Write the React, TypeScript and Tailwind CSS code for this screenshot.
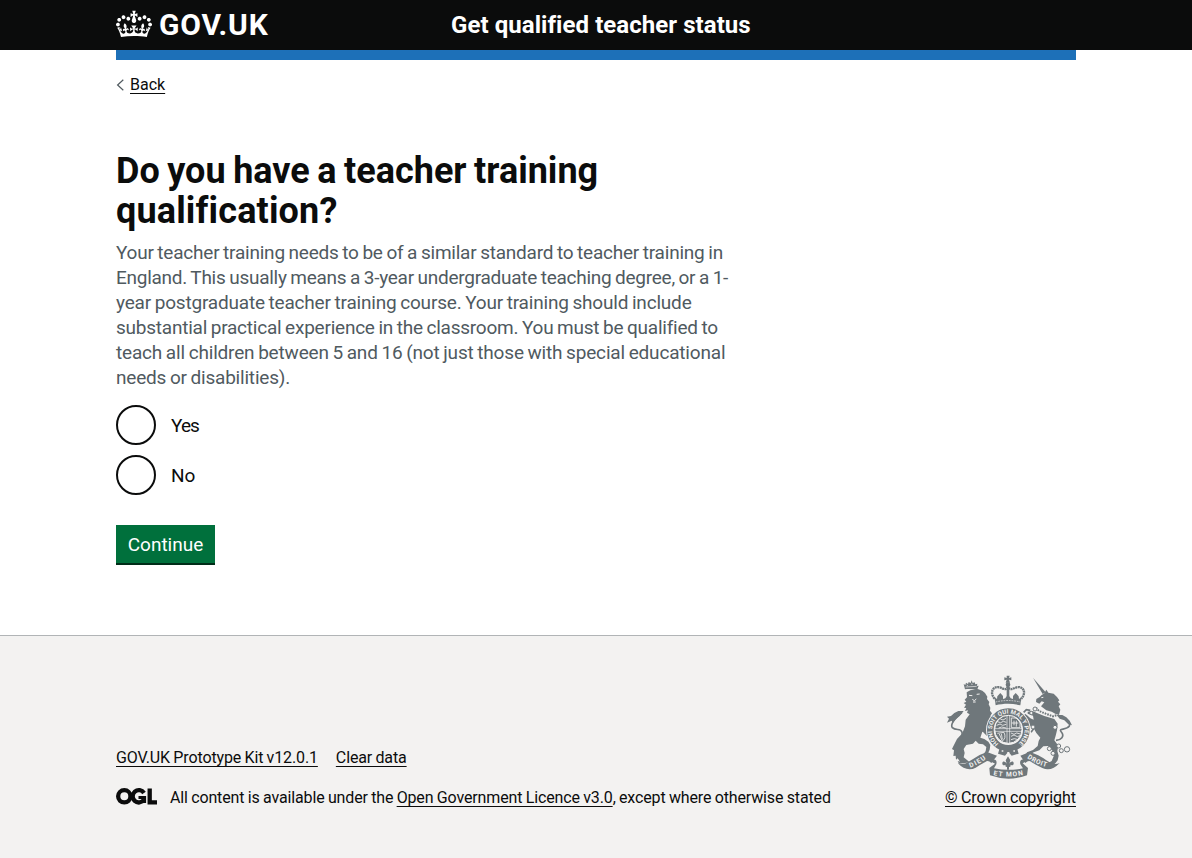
import type { ReactNode } from "react";

const link =
  "underline decoration-1 underline-offset-[3px] [text-decoration-skip-ink:none]";

function Crown() {
  return (
    <svg className="h-[30px] w-9 shrink-0" viewBox="0 0 132 97" fill="currentColor" aria-hidden="true">
      <path
        fillRule="evenodd"
        d="M25 30.2c3.5 1.5 7.7-.2 9.1-3.7 1.5-3.6-.2-7.8-3.9-9.2-3.6-1.4-7.6.3-9.1 3.9-1.4 3.5.3 7.5 3.9 9zM9 39.5c3.6 1.5 7.8-.2 9.2-3.7 1.5-3.6-.2-7.8-3.9-9.1-3.6-1.5-7.6.2-9.1 3.8-1.4 3.5.3 7.5 3.8 9zM4.4 57.2c3.5 1.5 7.7-.2 9.1-3.8 1.5-3.6-.2-7.7-3.9-9.1-3.5-1.5-7.6.3-9.1 3.8-1.4 3.5.3 7.6 3.9 9.1zm38.3-21.4c3.5 1.5 7.7-.2 9.1-3.8 1.5-3.6-.2-7.7-3.9-9.1-3.6-1.5-7.6.3-9.1 3.8-1.3 3.6.4 7.7 3.9 9.1zm64.4-5.6c-3.6 1.5-7.8-.2-9.1-3.7-1.5-3.6.2-7.8 3.8-9.2 3.6-1.4 7.7.3 9.2 3.9 1.3 3.5-.4 7.5-3.9 9zm15.9 9.3c-3.6 1.5-7.7-.2-9.1-3.7-1.5-3.6.2-7.8 3.7-9.1 3.6-1.5 7.7.2 9.2 3.8 1.5 3.5-.3 7.5-3.8 9zm4.7 17.7c-3.6 1.5-7.8-.2-9.2-3.8-1.5-3.6.2-7.7 3.9-9.1 3.6-1.5 7.7.3 9.2 3.8 1.3 3.5-.4 7.6-3.9 9.1zM89.3 35.8c-3.6 1.5-7.8-.2-9.2-3.8-1.4-3.6.2-7.7 3.9-9.1 3.6-1.5 7.7.3 9.2 3.8 1.4 3.6-.3 7.7-3.9 9.1zM69.7 17.7l8.9 4.7V9.3l-8.9 2.8c-.2-.3-.5-.6-.9-.9L72.4 0H59.6l3.5 11.2c-.3.3-.6.5-.9.9l-8.8-2.8v13.1l8.8-4.7c.3.3.6.7.9.9l-5 15.4v.1c-.2.8-.4 1.6-.4 2.4 0 4.1 3.1 7.5 7 8.1h.2c.3 0 .7.1 1 .1.4 0 .7 0 1-.1h.2c4-.6 7.1-4.1 7.1-8.1 0-.8-.1-1.7-.4-2.4V34l-5.1-15.4c.4-.2.7-.6 1-.9zM66 92.8c16.9 0 32.8 1.1 47.1 3.2 4-16.9 8.9-26.7 14-33.5l-9.6-3.4c1 4.9 1.1 7.2 0 10.2-1.5-1.4-3-4.3-4.2-8.7L108.6 76c2.8-2 5-3.2 7.5-3.3-4.4 9.4-10 11.9-13.6 11.2-4.3-.8-6.3-4.6-5.6-7.9 1-4.7 5.7-5.9 8-.5 4.3-8.7-3-11.4-7.6-8.8 7.1-7.2 7.9-13.5 2.1-21.1-8 6.1-8.1 12.3-4.5 20.8-4.7-5.4-12.1-2.5-9.5 6.2 3.4-5.2 7.9-2 7.2 3.1-.6 4.3-6.4 7.8-13.5 7.2-10.3-.9-10.9-8-11.2-13.8 2.5-.5 7.1 1.8 11 7.3L80.2 60c-4.1 4.4-8 5.3-12.3 5.4 1.4-4.4 8-11.6 8-11.6H55.5s6.4 7.2 7.9 11.6c-4.2-.1-8-1-12.3-5.4l1.4 16.4c3.9-5.5 8.5-7.7 10.9-7.3-.3 5.8-.9 12.8-11.1 13.8-7.2.6-12.9-2.9-13.5-7.2-.7-5 3.8-8.3 7.1-3.1 2.7-8.7-4.6-11.6-9.4-6.2 3.7-8.5 3.6-14.7-4.6-20.8-5.8 7.6-5 13.9 2.2 21.1-4.7-2.6-11.9.1-7.7 8.8 2.3-5.5 7.1-4.2 8.1.5.7 3.3-1.3 7.1-5.7 7.9-3.5.7-9-1.8-13.5-11.2 2.5.1 4.7 1.3 7.5 3.3l-4.7-15.4c-1.2 4.4-2.7 7.2-4.3 8.7-1.1-3-.9-5.3 0-10.2l-9.5 3.4c5 6.9 9.9 16.7 14 33.5 14.8-2.1 30.8-3.2 47.7-3.2z"
      />
    </svg>
  );
}

function OglMark() {
  return (
    <svg className="mb-[3px] h-[17px] w-[41px] shrink-0" viewBox="0 0 41 17" aria-label="OGL">
      <g fill="none" stroke="#0b0c0c" strokeWidth="4.3">
        <circle cx="8.3" cy="8.3" r="6.15" />
        <path d="M28 5A6.15 6.15 0 1 0 27.9 11.8" />
        <path d="M22.5 9.6H28.6V15" strokeWidth="3" />
        <path d="M33.7 0.5V14.3H41" />
      </g>
    </svg>
  );
}

function Crest() {
  return (
    <svg className="h-[104px] w-32" viewBox="48 30 384 312" fill="#6f777b" aria-hidden="true">
      {/* central crown */}
      <path d="M233 32h9l-2 7 7-2v9l-7-2 3 9h-13l3-9-7 2v-9l7 2z" />
      <circle cx="237" cy="59" r="7" />
      <path
        d="M197 101C180 82 193 62 212 67C225 71 229 77 237 66C245 77 250 71 263 67C282 62 294 82 277 101"
        fill="none"
        stroke="#6f777b"
        strokeWidth="7"
        strokeDasharray="6 1.5"
      />
      <path d="M233 64h8v40h-8zM196 96l8 6 1-8 9-10 8 9 0 9 7-2 8-14 8 14 7 2 0-9 8-9 9 10 1 8 8-6-4 25c-23-6-51-6-74 0z" />
      <path d="M200 111q37-9 74 0" fill="none" stroke="#f3f2f1" strokeWidth="2" strokeDasharray="5 3" />

      {/* lion */}
      <path d="M108 73L104 57l5 3 2-7 6 4 2-6 6 3 3-8 3 8 6-2 2 6 6-2-1 7 5-1-5 14c-12-4-24-5-36-3z" />
      <path d="M110 66l33-2M113 60l4 2M126 57l5 1" stroke="#f3f2f1" strokeWidth="2" fill="none" />
      <path d="M113 82L124 76L146 72L160 77L168 84L175 95L174 102L181 111L179 118L184 128L183 137L189 145L184 153L191 165L188 176L190 200L184 212L176 198L168 204L160 200L154 218L166 222L178 230L184 240L182 254L176 266L164 268L170 258L172 246L162 238L149 236L140 227L132 236L112 240L104 252L107 264L104 277L114 285L122 292L104 295L90 296L86 288L93 290L86 280L81 284L80 272L73 273L75 256L69 252L76 238L84 222L100 205L108 184L110 164L122 148L114 143L117 136L108 138L112 129L105 128L111 119L104 114L112 110L107 104L114 97Z" />
      <path d="M120 91l10 1M143 88l9-1M130 103l6 4 6-5M132 111l8 0" stroke="#f3f2f1" strokeWidth="3" fill="none" />
      <path d="M164 185l14-8 10 6-4 22-10 8-10-10z" />
      <path d="M79 243C95 230 103 216 99 202C95 187 81 199 70 188C62 177 78 160 99 142" stroke="#6f777b" strokeWidth="5" fill="none" />
      <path d="M104 138L88 138L76 144L66 153L54 155L60 161L54 173L68 167L71 175L80 163L92 153Z" />

      {/* unicorn */}
      <path d="M312 38L350 82L341 87Z" />
      <path d="M338 90L346 85L352 74L358 83L374 86L384 96L391 106L387 110L394 118L389 124L394 134L390 150L380 147L368 140L352 136L336 124L346 112L338 109L331 116L321 111L322 102L332 96Z" />
      <path d="M337 98l6-1" stroke="#f3f2f1" strokeWidth="3" />
      <path d="M321 128L330 138L350 146L372 154L384 150" stroke="#6f777b" strokeWidth="6" strokeDasharray="5 3" fill="none" />
      <path d="M322 143L346 153L376 162L386 176L384 196L380 212L376 226L388 242L385 258L389 272L386 286L378 296L364 300L357 294L368 288L374 274L371 258L357 243L343 244L331 256L314 262L298 272L290 270L294 262L312 255L326 243L329 228L334 218L322 204L312 186L304 184L298 196L290 192L292 183L300 176L288 168L282 156L288 146L296 152L304 160L314 164L312 152L296 146L296 140L310 138Z" />
      <path d="M304 136L292 134L284 142M318 186L306 202" stroke="#6f777b" strokeWidth="5" fill="none" />
      <g fill="none" stroke="#6f777b" strokeWidth="3">
        <circle cx="318" cy="132" r="6" fill="#f3f2f1" />
        <circle cx="307" cy="144" r="5" fill="#f3f2f1" />
        <circle cx="312" cy="186" r="6" fill="#f3f2f1" />
        <circle cx="378" cy="187" r="6" fill="#f3f2f1" />
        <circle cx="361" cy="251" r="6" fill="#f3f2f1" />
        <circle cx="372" cy="265" r="6" fill="#f3f2f1" />
        <circle cx="389" cy="243" r="6" fill="#f3f2f1" />
        <circle cx="397" cy="257" r="6" />
        <circle cx="414" cy="253" r="8" />
      </g>
      <path d="M381 226C396 225 408 214 397 201C386 188 411 197 421 183C426 172 410 160 393 155" stroke="#6f777b" strokeWidth="5" fill="none" />
      <path d="M383 150L400 150L412 157L422 167L429 181L418 178L406 166L392 161Z" />

      {/* shield and garter */}
      <ellipse cx="238" cy="195" rx="67" ry="67" fill="#f3f2f1" />
      <ellipse cx="238" cy="195" rx="54" ry="55" fill="none" stroke="#6f777b" strokeWidth="20" />
      <path id="garter" d="M209 236A49 50 0 1 1 267 236" fill="none" />
      <text fill="#f3f2f1" className="font-[Roboto] text-[18px] font-bold" textLength="246">
        <textPath href="#garter">HONI SOIT QUI MAL Y PENSE</textPath>
      </text>
      <ellipse cx="238" cy="193" rx="41" ry="42" stroke="#f3f2f1" strokeWidth="3" />
      <g stroke="#f3f2f1" fill="none" strokeWidth="2.5">
        <path d="M205 170l10 3 8-4 9 3M203 181l10-4 8 4 11-3M209 189l9-3 13 3M214 162l8 3 9-5" />
        <path d="M246 204l9 4 8-4 11 3M246 214l9-4 10 5 10-4M246 224l10-3 12 3" />
        <path d="M205 205l20-3q8 18-6 27M211 207l8 19M217 206l3 17" />
        <path d="M247 159h17l9 13v16h-26zM255 167v14M248 174h20M262 167v18" />
        <path d="M234 151v84M242 151v84M196 191h84M196 199h84" strokeWidth="2" />
      </g>
      <path d="M213 246L207 266L228 272L238 260L248 272L269 266L263 246L238 254Z" />
      <path d="M218 258h5M235 263h6M253 258h5" stroke="#f3f2f1" strokeWidth="4" />

      {/* fleur-de-lis */}
      <path d="M237 274L244 286L241 296C246 287 255 288 254 296C253 302 248 302 245 299L244 305L240 306V314H234V306L230 305L229 299C226 302 221 302 220 296C219 288 228 287 233 296L230 286Z" />

      {/* motto ribbon */}
      <path d="M86 294Q106 302 126 286Q150 268 174 261L204 272L187 294Q177 284 169 291Q152 300 140 308Q112 322 86 294Z" />
      <path d="M392 294Q372 302 352 286Q328 268 302 261L274 272L289 294Q299 284 307 291Q324 302 340 309Q366 322 392 294Z" />
      <path d="M176 277L189 283Q206 282 202 298L195 310Q238 319 282 310L274 298Q270 282 287 283L299 277L292 289L281 295L297 309L294 331Q238 351 183 331L181 309L198 296L187 290Z" />
      <g fill="#f3f2f1" className="font-[Roboto] text-[20px] font-bold">
        <path id="dieu" d="M124 308Q152 298 178 276" fill="none" />
        <text textLength="54"><textPath href="#dieu">DIEU</textPath></text>
        <path id="droit" d="M294 279Q322 299 358 307" fill="none" />
        <text textLength="64"><textPath href="#droit">DROIT</textPath></text>
        <path id="etmon" d="M193 330Q238 340 287 329" fill="none" />
        <text textLength="90"><textPath href="#etmon">ET MON</textPath></text>
      </g>
    </svg>
  );
}

function Radio({ id, children }: { id: string; children: ReactNode }) {
  return (
    <div className="flex h-10 items-center">
      <input
        id={id}
        type="radio"
        name="qualification"
        className="size-10 appearance-none rounded-full border-2 border-[#0b0c0c]"
      />
      <label htmlFor={id} className="pt-px pl-[15px] text-[19px] leading-[25px]">
        {children}
      </label>
    </div>
  );
}

export default function App() {
  return (
    <div className="flex min-h-[858px] flex-col bg-white font-[Roboto,sans-serif] text-[#0b0c0c]">
      <header className="h-[60px] bg-[linear-gradient(#0b0c0c_50px,transparent_50px)] text-white">
        <div className="mx-auto flex h-[60px] w-[960px] border-b-10 border-[#1d70b8]">
          <a href="#" className="flex w-[335px] gap-[7px] pt-[9px]">
            <Crown />
            <span className="text-[30px] leading-[32px] font-bold tracking-[0.8px]">GOV.UK</span>
          </a>
          <a href="#" className="pt-[10px] text-2xl leading-[30px] font-bold tracking-[0.06px]">
            Get qualified teacher status
          </a>
        </div>
      </header>

      <div className="mx-auto w-[960px]">
        <a href="#" className="mt-[15px] flex h-5 items-center gap-[5px] text-base leading-5">
          <svg className="h-[14px] w-[9px]" viewBox="0 0 9 14" fill="none" stroke="#505a5f" strokeWidth="1.2">
            <path d="M7.3 1.8L1.6 7l5.7 5.2" />
          </svg>
          <span className={link}>Back</span>
        </a>

        <main className="pt-[55px]">
          <h1 className="pt-px text-4xl leading-[40px] font-bold [word-spacing:-1.4px]">
            Do you have a teacher training
            <br />
            <span className="tracking-[0.15px]">qualification?</span>
          </h1>
          <p className="mt-[9px] text-[19px] leading-[25px] text-[#505a5f] [word-spacing:-0.8px] *:block">
            <span className="tracking-[-0.22px]">Your teacher training needs to be of a similar standard to teacher training in</span>
            <span className="tracking-[-0.26px]">England. This usually means a 3-year undergraduate teaching degree, or a 1-</span>
            <span className="tracking-[-0.19px]">year postgraduate teacher training course. Your training should include</span>
            <span className="tracking-[-0.23px]">substantial practical experience in the classroom. You must be qualified to</span>
            <span className="tracking-[-0.18px]">teach all children between 5 and 16 (not just those with special educational</span>
            <span className="tracking-[-0.2px]">needs or disabilities).</span>
          </p>
          <div className="mt-[15px] flex flex-col gap-[10px]">
            <Radio id="yes"><span className="tracking-[-0.9px]">Yes</span></Radio>
            <Radio id="no">No</Radio>
          </div>
          <button className="mt-[30px] h-[38px] w-[99px] bg-[#00703c] pt-px text-[19px] leading-[19px] text-white shadow-[0_2px_0_#002d18]">
            Continue
          </button>
        </main>
      </div>

      <footer className="mt-[72px] grow border-t border-[#b1b4b6] bg-[#f3f2f1] text-base leading-5 tracking-[-0.13px] [word-spacing:-0.5px]">
        <div className="mx-auto flex w-[960px] items-end justify-between pt-[39px]">
          <div className="flex flex-col gap-5">
            <div className="flex gap-[18px]">
              <a href="#" className={link}>GOV.UK Prototype Kit v12.0.1</a>
              <a href="#" className={link}>Clear data</a>
            </div>
            <div className="flex items-center gap-[13px]">
              <OglMark />
              <span>
                All content is available under the <a href="#" className={link}>Open Government Licence v3.0</a>, except
                where otherwise stated
              </span>
            </div>
          </div>
          <a href="#" className="flex w-[131px] flex-col items-start gap-[9px]">
            <Crest />
            <span className={`${link} whitespace-nowrap tracking-[-0.03px]`}>© Crown copyright</span>
          </a>
        </div>
      </footer>
    </div>
  );
}
